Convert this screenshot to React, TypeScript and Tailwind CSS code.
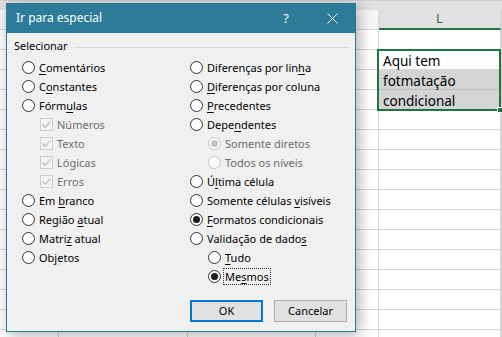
import React from "react";

type Item = {
  text: string;
  u?: number;
  kind?: "radio" | "check";
  sub?: boolean;
  checked?: boolean;
  disabled?: boolean;
  focus?: boolean;
};

const left: Item[] = [
  { text: "Comentários", u: 0 },
  { text: "Constantes", u: 1 },
  { text: "Fórmulas", u: 4 },
  { text: "Números", kind: "check", sub: true, checked: true, disabled: true },
  { text: "Texto", kind: "check", sub: true, checked: true, disabled: true },
  { text: "Lógicas", kind: "check", sub: true, checked: true, disabled: true },
  { text: "Erros", kind: "check", sub: true, checked: true, disabled: true },
  { text: "Em branco", u: 3 },
  { text: "Região atual", u: 7 },
  { text: "Matriz atual", u: 5 },
  { text: "Objetos", u: 2 },
];

const right: Item[] = [
  { text: "Diferenças por linha", u: 18 },
  { text: "Diferenças por coluna", u: 0 },
  { text: "Precedentes", u: 0 },
  { text: "Dependentes", u: 4 },
  { text: "Somente diretos", sub: true, checked: true, disabled: true },
  { text: "Todos os níveis", sub: true, disabled: true },
  { text: "Última célula", u: 1 },
  { text: "Somente células visíveis", u: 16 },
  { text: "Formatos condicionais", u: 0, checked: true },
  { text: "Validação de dados", u: 17 },
  { text: "Tudo", u: 0, sub: true },
  { text: "Mesmos", u: 2, sub: true, checked: true, focus: true },
];

function Label({ text, u }: { text: string; u?: number }) {
  if (u === undefined) return <>{text}</>;
  return (
    <>
      {text.slice(0, u)}
      <u className="underline-offset-[2px]">{text[u]}</u>
      {text.slice(u + 1)}
    </>
  );
}

function Radio({ checked, disabled }: { checked?: boolean; disabled?: boolean }) {
  return (
    <span
      className={`w-[13px] h-[13px] rounded-full border flex items-center justify-center shrink-0 ${
        disabled ? "border-[#c4c4c4] bg-[#fcfcfc]" : "border-[#333333] bg-white"
      }`}
    >
      {checked && (
        <span className={`w-[7px] h-[7px] rounded-full ${disabled ? "bg-[#c2c2c2]" : "bg-[#1a1a1a]"}`} />
      )}
    </span>
  );
}

function Check() {
  return (
    <span className="w-[13px] h-[13px] border border-[#cccccc] bg-[#f4f4f4] flex items-center justify-center shrink-0">
      <svg width="11" height="11" viewBox="0 0 11 11">
        <polyline points="1.5,5.5 4.2,8.2 9.5,2.5" fill="none" stroke="#b5b5b5" strokeWidth="1.1" />
      </svg>
    </span>
  );
}

function Row({ item }: { item: Item }) {
  return (
    <div className={`h-[19px] flex items-center gap-[2px] ${item.sub ? "pl-[18px]" : ""}`}>
      {item.kind === "check" ? <Check /> : <Radio checked={item.checked} disabled={item.disabled} />}
      <span
        className={`h-[17px] leading-[15px] px-[1px] border ${
          item.focus ? "border-dotted border-[#333]" : "border-transparent"
        } ${item.disabled ? "text-[#6d6d6d]" : "text-black"} whitespace-nowrap`}
      >
        <Label text={item.text} u={item.u} />
      </span>
    </div>
  );
}

const cols = ["w-[59px]", "w-[129px]", "w-[128px]", "w-[63px]", "w-[122px]", "flex-1"];

function SheetRow({ i }: { i: number }) {
  const texts = ["", "Aqui tem", "fotmatação", "condicional"];
  const gray = i === 2 || i === 3;
  return (
    <div className="h-[20px] flex">
      {cols.map((c, k) => (
        <div
          key={k}
          className={`${c} h-full border-r border-b ${
            k === 4 && gray ? "bg-[#d4d4d4] border-b-[#bdbdbd]" : "border-[#d6d6d6]"
          } ${k === 4 ? "border-r-[#d6d6d6]" : ""}`}
        >
          {k === 4 && texts[i] && (
            <div className="pl-[4px] pt-[2px] leading-[18px] text-[13.5px] text-black">{texts[i]}</div>
          )}
        </div>
      ))}
    </div>
  );
}

export default function App() {
  return (
    <div className="relative w-[502px] h-[337px] overflow-hidden bg-white font-['Noto_Sans',sans-serif]">
      {/* sheet behind */}
      <div className="h-[10px] bg-[#e1e1e1] border-t border-[#cfcfcf]" />
      <div className="h-[20px] flex">
        {cols.map((c, k) => (
          <div
            key={k}
            className={`${c} h-full border-r border-[#d6d6d6] flex items-center justify-center text-[13px] ${
              k === 4 ? "bg-[#e1e1e1] border-b-2 border-b-[#217346] text-[#217346]" : "bg-[#f7f7f7] border-b"
            }`}
          >
            {k === 4 ? "L" : ""}
          </div>
        ))}
      </div>
      {Array.from({ length: 16 }).map((_, i) => (
        <SheetRow key={i} i={i} />
      ))}

      {/* selection */}
      <div className="absolute left-[377px] top-[49px] w-[124px] h-[62px] border-2 border-[#217346]" />
      <div className="absolute left-[497px] top-[107px] w-[6px] h-[6px] bg-[#217346] border border-white" />

      {/* dialog */}
      <div className="absolute left-[6px] top-[3px] w-[350px] h-[329px] border border-[#2b7a99] bg-[#f0f0f0] flex flex-col shadow-[3px_3px_14px_rgba(0,0,0,0.32)] text-[11px]">
        <div className="h-[29px] bg-[#2b7b99] flex items-center text-white shrink-0">
          <span className="pl-[9px] flex-1 text-[12px] pb-[1px]">Ir para especial</span>
          <span className="w-[46px] text-center text-[13px]">?</span>
          <span className="w-[46px] flex items-center justify-center">
            <svg width="11" height="11" viewBox="0 0 11 11">
              <path d="M0.5 0.5 L10.5 10.5 M10.5 0.5 L0.5 10.5" stroke="white" strokeWidth="1" />
            </svg>
          </span>
        </div>

        <div className="flex-1 flex flex-col pt-[4px]">
          <div className="h-[19px] flex items-center pl-[7px] pr-[7px]">
            <span className="text-black">Selecionar</span>
            <div className="flex-1 ml-[6px] mt-[1px] border-t border-[#d7d7d7]" />
          </div>
          <div className="mt-[2px] flex pl-[15px]">
            <div className="w-[168px] flex flex-col">
              {left.map((it) => (
                <Row key={it.text} item={it} />
              ))}
            </div>
            <div className="flex-1 flex flex-col">
              {right.map((it) => (
                <Row key={it.text} item={it} />
              ))}
            </div>
          </div>
          <div className="mt-[14px] flex justify-end gap-[11px] pr-[8px]">
            <button className="w-[73px] h-[22px] border-2 border-[#0078d7] bg-[#e1e1e1] text-black text-[11px]">
              OK
            </button>
            <button className="w-[73px] h-[22px] border border-[#adadad] bg-[#e1e1e1] text-black text-[11px]">
              Cancelar
            </button>
          </div>
        </div>
      </div>
    </div>
  );
}
